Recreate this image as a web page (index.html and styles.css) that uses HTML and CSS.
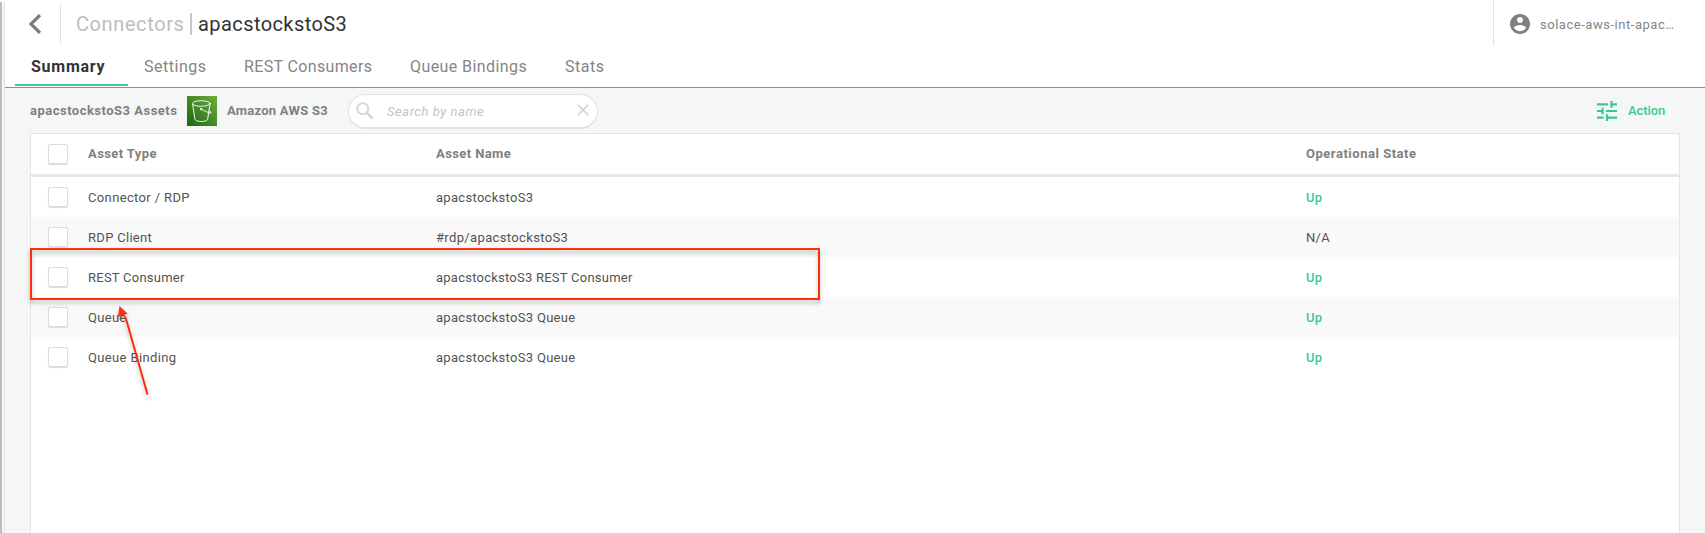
FILE: index.html
```html
<!DOCTYPE html>
<html lang="en">
<head>
<meta charset="utf-8">
<title>Connectors | apacstockstoS3</title>
<link rel="stylesheet" href="styles.css">
</head>
<body>
<div class="app">
  <div class="rail"></div>
  <main class="main">
    <header class="header">
      <svg class="back" viewBox="0 0 14 20"><path d="M12 1.2 3 10l9 8.8" fill="none" stroke="#7c7c7c" stroke-width="3.2"/></svg>
      <h1 class="crumbs"><span class="crumb-parent">Connectors</span><span class="crumb-bar"></span><span class="crumb-current">apacstockstoS3</span></h1>
      <div class="account">
        <svg class="avatar" viewBox="2 2 20 20"><path fill="#808080" d="M12 2C6.48 2 2 6.48 2 12s4.48 10 10 10 10-4.480 10-10S17.520 2 12 2zm0 3c1.660 0 3 1.340 3 3s-1.340 3-3 3-3-1.340-3-3 1.340-3 3-3zm0 14.200c-2.500 0-4.710-1.280-6-3.220.030-1.990 4-3.080 6-3.080 1.990 0 5.970 1.090 6 3.080-1.290 1.940-3.500 3.220-6 3.220z"/></svg>
        <span class="account-name">solace-aws-int-apac…</span>
      </div>
    </header>
    <nav class="tabs">
      <a class="tab tab-summary">Summary</a>
      <a class="tab tab-settings">Settings</a>
      <a class="tab tab-rest">REST Consumers</a>
      <a class="tab tab-queue">Queue Bindings</a>
      <a class="tab tab-stats">Stats</a>
    </nav>
    <section class="content">
      <div class="toolbar">
        <span class="assets-title">apacstockstoS3 Assets</span>
        <svg class="s3" viewBox="0 0 30 30">
          <defs><linearGradient id="g" x1="0" y1="1" x2="1" y2="0"><stop offset="0" stop-color="#1b660f"/><stop offset="1" stop-color="#6cae3e"/></linearGradient></defs>
          <rect width="30" height="30" fill="url(#g)"/>
          <g fill="none" stroke="#fff" stroke-width="0.9" stroke-linecap="round"><ellipse cx="14.300" cy="7.500" rx="8.800" ry="2.800"/><path d="M5.500 7.800 8 23.400c1 2.800 11.600 2.800 12.600 0L23.100 7.800M14.200 13.200c3 1.500 8.300 4.200 9.700 3.900 1.200-.5-.9-1.900-2-2.500"/></g>
          <circle cx="14.200" cy="13.200" r="1.100" fill="#fff"/>
        </svg>
        <span class="service">Amazon AWS S3</span>
        <div class="search">
          <svg class="glass" viewBox="0 0 18 18"><g fill="none" stroke="#d6d6d6" stroke-width="2"><circle cx="6.700" cy="6.700" r="5.500"/><path d="m10.700 10.700 6 6" stroke-width="2.500"/></g></svg>
          <span class="placeholder">Search by name</span>
          <svg class="clear" viewBox="0 0 12 12"><path d="m.7.7 10.600 10.600M11.300.7.7 11.300" stroke="#d0d0d0" stroke-width="1.500"/></svg>
        </div>
        <div class="action">
          <svg class="tune" viewBox="3 3 18 18"><path fill="#3cc896" d="M3 17v2h6v-2H3zM3 5v2h10V5H3zm10 16v-2h8v-2h-8v-2h-2v6h2zM7 9v2H3v2h4v2h2V9H7zm14 4v-2H11v2h10zm-6-4h2V7h4V5h-4V3h-2v6z"/></svg>
          <span class="action-label">Action</span>
        </div>
      </div>
      <div class="table">
        <div class="row head"><i class="box"></i><span class="h-type">Asset Type</span><span class="h-name">Asset Name</span><span class="h-state">Operational State</span></div>
        <div class="row"><i class="box"></i><span class="wide">Connector / RDP</span><span>apacstockstoS3</span><span class="up">Up</span></div>
        <div class="row alt"><i class="box"></i><span>RDP Client</span><span class="wide">#rdp/apacstockstoS3</span><span>N/A</span></div>
        <div class="row"><i class="box"></i><span class="narrow">REST Consumer</span><span class="narrow">apacstockstoS3 REST Consumer</span><span class="up">Up</span></div>
        <div class="row alt"><i class="box"></i><span>Queue</span><span>apacstockstoS3 Queue</span><span class="up">Up</span></div>
        <div class="row"><i class="box"></i><span class="wide">Queue Binding</span><span>apacstockstoS3 Queue</span><span class="up">Up</span></div>
      </div>
    </section>
  </main>
  <div class="highlight"></div>
  <svg class="arrow" viewBox="0 0 40 100"><path d="M32.500 90.500 10.500 13" stroke="#ff2e0c" stroke-width="2"/><path d="m4.500 2 8.200 7.800-9.700 3z" fill="#ff2e0c"/></svg>
</div>
</body>
</html>
```

FILE: styles.css
```css
* { box-sizing: border-box; }
body { margin: 0; font-family: Roboto, "Open Sans", sans-serif; font-size: 13px; color: #535353; background: #fff; }
.app { position: relative; display: flex; width: 1705px; height: 533px; overflow: hidden; }
.rail { width: 5px; flex: none; border-left: 2px solid #bdbdbd; border-right: 1px solid #e2e2e2; background: #f7f7f7; margin-top: 2px; }
.main { flex: 1; display: flex; flex-direction: column; min-width: 0; white-space: nowrap; }

.header { display: flex; align-items: center; height: 48px; padding-left: 23px; }
.back { width: 14px; height: 20px; }
.crumbs { display: flex; align-items: center; height: 40px; margin: 0 0 0 18px; padding-left: 15px; border-left: 1px solid #e3e3e3; font-size: 20px; font-weight: 400; }
.crumb-parent { width: 114px; color: #bdbdbd; letter-spacing: .6px; }
.crumb-bar { width: 2px; height: 22px; margin-right: 6px; background: #c6c6c6; }
.crumb-current { color: #333; letter-spacing: .42px; }
.account { display: flex; align-items: center; align-self: flex-start; width: 212px; height: 46px; margin-left: auto; padding: 2px 0 0 16px; border-left: 1px solid #e0e0e0; color: #858585; }
.avatar { width: 20px; height: 20px; margin-right: 10px; }
.account-name { letter-spacing: .53px; }

.tabs { display: flex; height: 40px; padding-left: 10px; border-bottom: 1px solid #38b78d; font-size: 16px; color: #858585; }
.tab { height: 38px; padding-top: 9px; line-height: 19px; }
.tab-summary { width: 113px; padding-left: 16px; font-weight: 700; color: #333; border-bottom: 2px solid #42c598; letter-spacing: .75px; }
.tab-settings { width: 101px; padding-left: 16px; letter-spacing: .52px; }
.tab-rest { width: 165px; padding-left: 15px; letter-spacing: .36px; }
.tab-queue { width: 156px; padding-left: 16px; letter-spacing: .42px; }
.tab-stats { padding-left: 15px; letter-spacing: .5px; }

.content { flex: 1; display: flex; flex-direction: column; padding: 0 25px; background: #f5f7f7; }
.toolbar { display: flex; align-items: center; height: 45px; font-weight: 700; color: #808080; }
.assets-title { width: 157px; letter-spacing: .49px; }
.s3 { width: 30px; height: 30px; }
.service { width: 121px; margin-left: 10px; letter-spacing: .25px; }
.search { display: flex; align-items: center; width: 250px; height: 35px; margin-top: 1px; padding: 0 8px 0 7px; border: 1px solid #e2e2e2; border-bottom-width: 2px; border-radius: 18px; background: #fff; font-weight: 400; font-style: italic; color: #c4c4c4; }
.glass { width: 18px; height: 18px; margin-right: 13px; }
.placeholder { padding-top: 2px; letter-spacing: .54px; }
.clear { width: 12px; height: 12px; margin: 0 0 2px auto; }
.action { display: flex; align-items: center; margin-left: auto; width: 83px; color: #3cc896; font-weight: 500; }
.tune { width: 20px; height: 20px; margin-right: 11px; }
.action-label { letter-spacing: -.1px; }

.table { flex: 1; border: 1px solid #e4e6e6; border-bottom: 0; background: #fff; }
.row { display: grid; grid-template-columns: 57px 348px 870px 1fr; align-items: center; height: 40px; line-height: 16px; letter-spacing: .3px; }
.row > span { padding-top: 1px; }
.row .wide { letter-spacing: .36px; }
.row .narrow { letter-spacing: .24px; }
.head { height: 43px; border-bottom: 3px solid #e6e7e8; color: #808080; font-weight: 700; }
.row.head > span { padding: 0 0 1px; letter-spacing: .4px; }
.row.head > .h-state { letter-spacing: .52px; }
.alt { background: #f9f9f9; }
.box { width: 20px; height: 20px; margin-left: 17px; border: 1px solid #dcdcdc; border-radius: 2px; background: #fff; box-shadow: 0 1px 1px #ddd; }
.row .up { color: #3cc896; font-weight: 500; }

.highlight { position: absolute; left: 30px; top: 248px; width: 790px; height: 52px; border: 2px solid #ff2e0c; filter: drop-shadow(0 3px 2px rgba(0, 0, 0, .3)); }
.arrow { position: absolute; left: 115px; top: 304px; width: 40px; height: 100px; filter: drop-shadow(0 3px 2px rgba(0, 0, 0, .25)); }
```
